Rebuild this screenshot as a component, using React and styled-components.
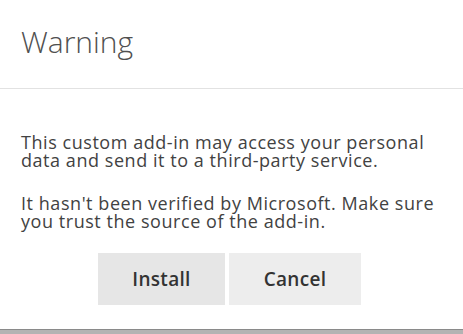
import React from "react";
import styled, { createGlobalStyle } from "styled-components";

const Global = createGlobalStyle`
  html, body { margin: 0; padding: 0; background: #ffffff; }
  body { font-family: "Open Sans", "Noto Sans", sans-serif; }
`;

const Dialog = styled.div`
  width: 463px;
  height: 334px;
  display: flex;
  flex-direction: column;
  background: #ffffff;
  box-sizing: border-box;
`;

const Header = styled.div`
  height: 89px;
  box-sizing: border-box;
  padding: 22px 21px 0;
  border-bottom: 1px solid #e2e2e2;
`;

const Title = styled.h1`
  margin: 0;
  font-family: "Open Sans", sans-serif;
  font-weight: 300;
  font-size: 30px;
  line-height: 40px;
  color: #505050;
`;

const Body = styled.div`
  padding: 44px 21px 0;
  display: flex;
  flex-direction: column;
  gap: 25px;
`;

const Para = styled.p`
  margin: 0;
  font-family: "Open Sans", sans-serif;
  font-size: 18px;
  letter-spacing: 0.55px;
  line-height: 18px;
  color: #424242;
  white-space: nowrap;
`;

const Actions = styled.div`
  display: flex;
  justify-content: center;
  gap: 4px;
  margin-top: 23px;
  padding-right: 4px;
`;

const Button = styled.button`
  width: ${(p) => p.$w}px;
  height: 52px;
  border: none;
  background: ${(p) => (p.$primary ? "#e6e6e6" : "#ededed")};
  font-family: "Open Sans", sans-serif;
  font-weight: 600;
  font-size: 19px;
  letter-spacing: 0.3px;
  color: #333333;
  padding: 0;
`;

const Spacer = styled.div`
  flex: 1;
`;

const Footer = styled.div`
  height: 5px;
  border-top: 1px solid #8a8a8a;
  background: #b3b3b3;
  box-sizing: border-box;
`;

export default function App() {
  return (
    <>
      <Global />
      <Dialog>
        <Header>
          <Title>Warning</Title>
        </Header>
        <Body>
          <Para>
            This custom add-in may access your personal
            <br />
            data and send it to a third-party service.
          </Para>
          <Para>
            It hasn't been verified by Microsoft. Make sure
            <br />
            you trust the source of the add-in.
          </Para>
        </Body>
        <Actions>
          <Button $primary $w={127}>Install</Button>
          <Button $w={132}>Cancel</Button>
        </Actions>
        <Spacer />
        <Footer />
      </Dialog>
    </>
  );
}
